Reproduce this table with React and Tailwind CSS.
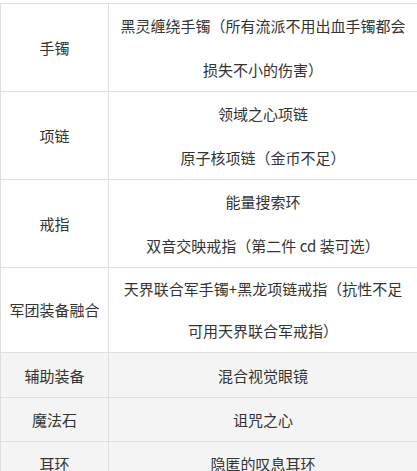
const ROWS = [
  { label: "手镯", lines: ["黑灵缠绕手镯（所有流派不用出血手镯都会损失不小的伤害）"], h: "h-[87px]", lh: "leading-[43.5px]" },
  { label: "项链", lines: ["领域之心项链", "原子核项链（金币不足）"], h: "h-[87px]", lh: "leading-[43.5px]" },
  { label: "戒指", lines: ["能量搜索环", "双音交映戒指（第二件 cd 装可选）"], h: "h-[87px]", lh: "leading-[43.5px]" },
  { label: "军团装备融合", lines: ["天界联合军手镯+黑龙项链戒指（抗性不足可用天界联合军戒指）"], h: "h-[84px]", lh: "leading-[42px]" },
  { label: "辅助装备", lines: ["混合视觉眼镜"], h: "h-[45px]", lh: "leading-[43px]", gray: true },
  { label: "魔法石", lines: ["诅咒之心"], h: "h-[43px]", lh: "leading-[43px]", gray: true },
  { label: "耳环", lines: ["隐匿的叹息耳环"], h: "h-[43px]", lh: "leading-[43px]", gray: true },
];

export default function App() {
  return (
    <div
      className="w-[417px] h-[471px] overflow-hidden bg-white pt-[3px] text-[15px] text-[#333]"
      style={{ fontFamily: '"Microsoft YaHei", "Noto Sans CJK SC", sans-serif' }}
    >
      <table className="w-[418px] border-collapse table-fixed">
        <colgroup>
          <col className="w-[108px]" />
          <col />
        </colgroup>
        <tbody>
          {ROWS.map((r) => (
            <tr key={r.label} className={r.gray ? "bg-[#f4f4f4]" : "bg-white"}>
              <td className={`${r.h} ${r.lh} border border-[#dedede] text-center align-middle p-0`}>
                {r.label}
              </td>
              <td className={`${r.h} ${r.lh} border border-[#dedede] text-center align-middle px-[10px] py-0`}>
                {r.lines.map((l) => (
                  <p key={l}>{l}</p>
                ))}
              </td>
            </tr>
          ))}
        </tbody>
      </table>
    </div>
  );
}
